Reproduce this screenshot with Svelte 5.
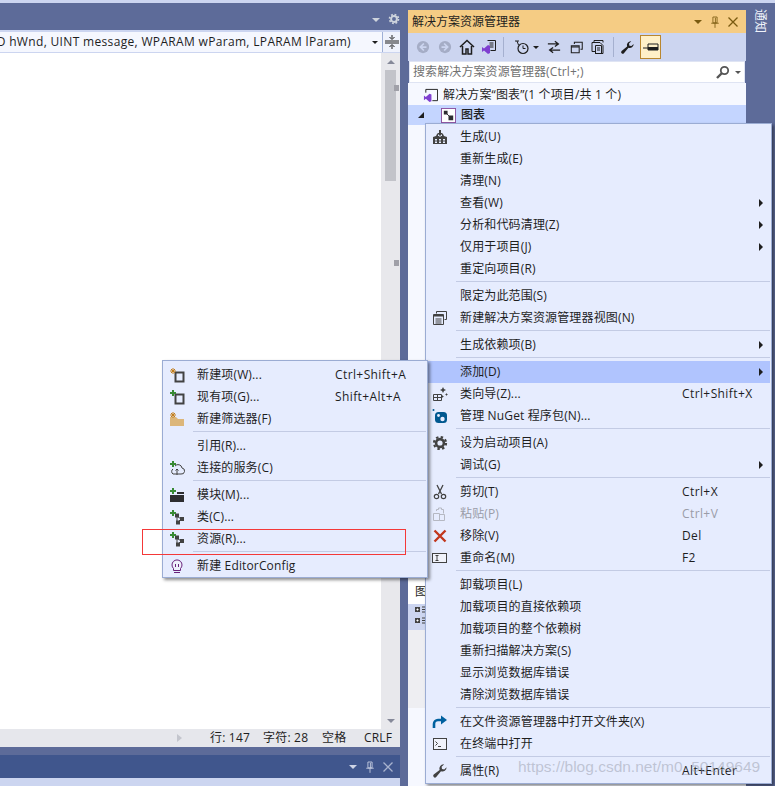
<script>
  const mainMenu = [
    { t: '生成(U)', i: 'build' }, { t: '重新生成(E)' }, { t: '清理(N)' },
    { t: '查看(W)', a: 1 }, { t: '分析和代码清理(Z)', a: 1 }, { t: '仅用于项目(J)', a: 1 }, { t: '重定向项目(R)' },
    { sep: 1 },
    { t: '限定为此范围(S)' }, { t: '新建解决方案资源管理器视图(N)', i: 'view' },
    { sep: 1 },
    { t: '生成依赖项(B)', a: 1 },
    { sep: 1 },
    { t: '添加(D)', a: 1, hi: 1 }, { t: '类向导(Z)...', s: 'Ctrl+Shift+X', i: 'wizard' }, { t: '管理 NuGet 程序包(N)...', i: 'nuget' },
    { sep: 1 },
    { t: '设为启动项目(A)', i: 'gear' }, { t: '调试(G)', a: 1 },
    { sep: 1 },
    { t: '剪切(T)', s: 'Ctrl+X', i: 'cut' }, { t: '粘贴(P)', s: 'Ctrl+V', i: 'paste', dis: 1 },
    { t: '移除(V)', s: 'Del', i: 'remove' }, { t: '重命名(M)', s: 'F2', i: 'rename' },
    { sep: 1 },
    { t: '卸载项目(L)' }, { t: '加载项目的直接依赖项' }, { t: '加载项目的整个依赖树' },
    { t: '重新扫描解决方案(S)' }, { t: '显示浏览数据库错误' }, { t: '清除浏览数据库错误' },
    { sep: 1 },
    { t: '在文件资源管理器中打开文件夹(X)', i: 'open' }, { t: '在终端中打开', i: 'term' },
    { sep: 1 },
    { t: '属性(R)', s: 'Alt+Enter', i: 'wrench' }
  ];
  const subMenu = [
    { t: '新建项(W)...', s: 'Ctrl+Shift+A', i: 'newitem' }, { t: '现有项(G)...', s: 'Shift+Alt+A', i: 'existing' }, { t: '新建筛选器(F)', i: 'filter' },
    { sep: 1 },
    { t: '引用(R)...' }, { t: '连接的服务(C)', i: 'service' },
    { sep: 1 },
    { t: '模块(M)...', i: 'module' }, { t: '类(C)...', i: 'cls' }, { t: '资源(R)...', i: 'cls' },
    { sep: 1 },
    { t: '新建 EditorConfig', i: 'bulb' }
  ];
</script>

{#snippet plus(x, y)}
  <path d="M{x - 1} {y - 3}h2v2h2v2h-2v2h-2v-2h-2v-2h2z" fill="#388a34" />
{/snippet}
{#snippet star(x, y)}
  <path d="M{x} {y - 3}v6M{x - 3} {y}h6M{x - 2} {y - 2}l4 4M{x + 2} {y - 2}l-4 4" stroke="#c27d1a" stroke-width="1" fill="none" />
{/snippet}
{#snippet gearShape(c)}
  <circle cx="8" cy="8" r="6" fill="none" stroke={c} stroke-width="2.2" stroke-dasharray="2.4 2.31" />
  <circle cx="8" cy="8" r="3.9" fill="none" stroke={c} stroke-width="2.6" />
{/snippet}
{#snippet wrenchShape(c)}
  <path d="M14.6 4.2a4.2 4.2 0 0 1-5.6 4L4.2 14a1.7 1.7 0 0 1-2.5-2.4L7.6 7A4.2 4.2 0 0 1 12 1.4L9.6 3.8l.4 2.2 2.2.4z" fill={c} />
{/snippet}

{#snippet icon(n)}
  <svg class="ic" viewBox="0 0 16 16" width="16" height="16">
    {#if n === 'build'}
      <path d="M1 15V8l3-1 1-2h1v2h1l1 1 1-1h1V5h1l1 2 3 1v7z" fill="#424242" />
      <path d="M7 1h2v3h2L8 7 5 4h2z" fill="#424242" />
      <path d="M3 10h2v1.5H3zM7 10h2v1.5H7zM11 10h2v1.5h-2zM3 12.5h2V14H3zM7 12.5h2V14H7zM11 12.5h2V14h-2z" fill="#e6ecfe" />
    {:else if n === 'view'}
      <path d="M4.5 3.5V1.500h10v8h-2" fill="none" stroke="#424242" />
      <path d="M1.5 4.5h10v10h-10z" fill="none" stroke="#424242" />
      <path d="M1.5 5h10v1.500h-10zM3.5 8.500h6v1h-6zM3.5 10.500h6v1h-6zM3.5 12.500h6v1h-6z" fill="#424242" />
    {:else if n === 'wizard'}
      <path d="M1.5 8.5h8v6h-8zM5.5 8.5v6M1.5 11.5h8" fill="none" stroke="#424242" />
      <path d="M11 1l1 2 2 1-2 1-1 2-1-2-2-1 2-1zM14.5 7l.5 1 1 .5-1 .5-.5 1-.5-1-1-.5 1-.5zM10.500 9l.5 1 1 .5-1 .5-.5 1-.5-1-1-.5 1-.5z" fill="#424242" />
    {:else if n === 'nuget'}
      <rect x="3" y="4" width="12" height="11" rx="3.500" fill="#00588f" />
      <circle cx="1.500" cy="2" r="1" fill="#00588f" />
      <circle cx="6.500" cy="7.500" r="1.400" fill="#e6ecfe" />
      <circle cx="10.500" cy="11" r="2.200" fill="#e6ecfe" />
    {:else if n === 'gear'}
      {@render gearShape('#424242')}
    {:else if n === 'cut'}
      <path d="M5 1l4.500 9M11 1L6.500 10" stroke="#424242" stroke-width="1.300" fill="none" />
      <circle cx="4.500" cy="12.500" r="2.200" fill="none" stroke="#424242" stroke-width="1.200" />
      <circle cx="11.500" cy="12.500" r="2.200" fill="none" stroke="#424242" stroke-width="1.200" />
    {:else if n === 'paste'}
      <path d="M4.500 5V3.500h2V2h3v1.500h2v4M1.500 7.500h6v7h-6zM7.500 8.500h5v6h-5z" fill="none" stroke="#b5b8c2" />
    {:else if n === 'remove'}
      <path d="M2.500 2.500l11 11M13.500 2.500l-11 11" stroke="#c1371d" stroke-width="2.400" fill="none" />
    {:else if n === 'rename'}
      <rect x="0.500" y="3.500" width="14" height="9" fill="#f1f3fb" stroke="#424242" />
      <path d="M3.500 5.500h3M3.500 10.500h3M5 5.500v5" stroke="#424242" fill="none" />
    {:else if n === 'open'}
      <path d="M2 14V10a4 4 0 0 1 4-4h6" fill="none" stroke="#00609f" stroke-width="2.600" />
      <path d="M9 1.500l6 4.500-6 4.500z" fill="#00609f" />
    {:else if n === 'term'}
      <rect x="1.500" y="2.500" width="13" height="11" fill="#f1f3fb" stroke="#424242" />
      <path d="M3.500 5.500l2 2-2 2M6 10.500h3" fill="none" stroke="#424242" />
    {:else if n === 'wrench'}
      {@render wrenchShape('#424242')}
    {:else if n === 'newitem'}
      <path d="M6.500 5.500h8v9h-8z" fill="none" stroke="#424242" stroke-width="2" />
      {@render star(4, 4)}
    {:else if n === 'existing'}
      <path d="M6.500 5.500h8v9h-8z" fill="none" stroke="#424242" stroke-width="2" />
      {@render plus(4, 4)}
    {:else if n === 'filter'}
      <path d="M1 6h6l2 2h6v7H1z" fill="#dcb67a" />
      {@render star(4, 4)}
    {:else if n === 'service'}
      <path d="M4 9a3 3 0 0 0 0 5h8a3 3 0 0 0 1-6 4 4 0 0 0-7-2" fill="none" stroke="#424242" />
      <path d="M8 15V9M6.500 10.500L8 9l1.500 1.500" fill="none" stroke="#424242" />
      {@render plus(4, 4)}
    {:else if n === 'module'}
      <path d="M1 8h14v7H1z" fill="#2d2d30" />
      <path d="M8 5h7v2H8z" fill="#2d2d30" />
      {@render plus(4, 4)}
    {:else if n === 'cls'}
      <path d="M6 4.500h4v4H6zM11 8h4v4h-4zM7 11.500h4v4H7z" fill="#424242" />
      <path d="M8 7l4 3M12 10l-3 3M8 7v5" stroke="#424242" fill="none" />
      {@render plus(4, 4)}
    {:else if n === 'bulb'}
      <path d="M4.500 10.500a5 5 0 1 1 7 0v2h-7z" fill="#eef0fb" stroke="#68217a" />
      <path d="M5 14.500h6" stroke="#68217a" />
      <path d="M6.500 6v3M9.500 6v3" stroke="#68217a" />
    {/if}
  </svg>
{/snippet}

{#snippet menu(items, cls)}
  <div class={cls}>
    {#each items as it}
      {#if it.sep}
        <div class="sep"></div>
      {:else}
        <div class="item" class:hi={it.hi} class:dis={it.dis}>
          <span class="icol">{#if it.i}{@render icon(it.i)}{/if}</span>
          <span class="lbl">{it.t}</span>
          <span class="sc">{it.s ?? ''}{#if it.a}<i class="arrow"></i>{/if}</span>
        </div>
      {/if}
    {/each}
  </div>
{/snippet}

<div class="root">
  <div class="topstrip"></div>
  <div class="work">
    <section class="left">
      <div class="tabs">
        <i class="drop light"></i>
        <svg class="tabgear" viewBox="0 0 16 16" width="12" height="12">{@render gearShape('#ced4dd')}</svg>
      </div>
      <div class="nav">
        <div class="navbox">
          <span class="sig">D hWnd, UINT message, WPARAM wParam, LPARAM lParam)</span>
          <i class="drop dark"></i>
        </div>
        <div class="split">
          <svg viewBox="0 0 14 14" width="14" height="14"><path d="M0 6h14M0 8h14M7 0v3.500M7 10.500V14M4.500 2L7 4.500 9.500 2M4.500 12L7 9.500 9.500 12" fill="none" stroke="#1e1e1e" /></svg>
        </div>
      </div>
      <div class="editor">
        <div class="code"></div>
        <div class="scroll">
          <i class="sup"></i>
          <div class="thumb"></div>
          <b class="mark m1"></b>
          <b class="mark m2"></b>
          <i class="sdown"></i>
        </div>
      </div>
      <div class="status">
        <i class="sarrow"></i>
        <span class="st s1">行: 147</span>
        <span class="st s2">字符: 28</span>
        <span class="st s3">空格</span>
        <span class="st s4">CRLF</span>
      </div>
      <div class="phead">
        <i class="drop light2"></i>
        <svg viewBox="0 0 12 14" width="10" height="12"><path d="M3.500 1h5v7h-5zM1.500 8.500h9M6 8.500V14M6.500 2v6" fill="none" stroke="#ced4e6" /></svg>
        <svg viewBox="0 0 10 10" width="10" height="10"><path d="M.5.5l9 9M9.500.5l-9 9" stroke="#a8b3cf" stroke-width="1.300" /></svg>
      </div>
      <div class="pbody"></div>
    </section>

    <section class="se">
      <header class="sehead">
        <span class="setitle">解决方案资源管理器</span>
        <i class="drop brown"></i>
        <svg viewBox="0 0 12 14" width="10" height="12"><path d="M3.500 1h5v7h-5zM1.500 8.500h9M6 8.500V14M6.500 2v6" fill="none" stroke="#7a5a10" /></svg>
        <svg viewBox="0 0 10 10" width="10" height="10"><path d="M.5.5l9 9M9.500.5l-9 9" stroke="#7a5a10" stroke-width="1.300" /></svg>
      </header>
      <div class="tools">
        <svg viewBox="0 0 16 16" width="14" height="14"><circle cx="8" cy="8" r="7" fill="#a5adc6" /><path d="M9 4L5 8l4 4M5 8h7" fill="none" stroke="#ccd5f0" stroke-width="2" /></svg>
        <svg viewBox="0 0 16 16" width="14" height="14"><circle cx="8" cy="8" r="7" fill="#a5adc6" /><path d="M7 4l4 4-4 4M11 8H4" fill="none" stroke="#ccd5f0" stroke-width="2" /></svg>
        <svg viewBox="0 0 16 16" width="16" height="16"><path d="M1 8l7-6.500L15 8M3.500 7v8h3.500v-5h2v5h3.500V7" fill="none" stroke="#1e1e1e" stroke-width="1.500" /></svg>
        <svg viewBox="0 0 16 16" width="16" height="16"><path d="M6.500 1.500h8v10h-5" fill="#ccd5f0" stroke="#1e1e1e" /><path d="M8.500 4h4M8.500 6h4M8.500 8h4" stroke="#1e1e1e" /><path d="M1 8l2 1.500L7 6l2 1v7l-2 1-4-3.500L1 13z" fill="#7f3fd0" /></svg>
        <b class="tsep"></b>
        <svg viewBox="0 0 16 16" width="16" height="16"><circle cx="9" cy="9.500" r="5" fill="none" stroke="#1e1e1e" stroke-width="1.200" /><path d="M9 6.500v3h2.500M1 2h4M3 2l1.500 4" fill="none" stroke="#1e1e1e" /></svg>
        <i class="drop dark tdrop"></i>
        <svg viewBox="0 0 16 16" width="14" height="14"><path d="M1 4.500h12M9 1.500l4 3-4 3M15 11.500H3M7 8.500l-4 3 4 3" fill="none" stroke="#1e1e1e" stroke-width="1.500" /></svg>
        <svg viewBox="0 0 16 16" width="14" height="14"><path d="M1.500 6.500h9v8h-9zM5 4.500V2.500h9v8h-2M1.500 8h9" fill="none" stroke="#1e1e1e" stroke-width="1.200" /></svg>
        <svg viewBox="0 0 16 16" width="16" height="16"><path d="M4 3.500V1.500h6l3 0v2M2 5.500V3.500h8l3 3v8H5M2 5.500v7h3" fill="none" stroke="#1e1e1e" /><path d="M5.500 6.500h6v8h-6zM7 9h3M7 11h3" fill="none" stroke="#1e1e1e" /></svg>
        <b class="tsep"></b>
        <svg viewBox="0 0 16 16" width="15" height="15">{@render wrenchShape('#1e1e1e')}</svg>
        <div class="pinbtn"><svg viewBox="0 0 16 10" width="16" height="10"><path d="M0 6h5V2h10v6H5V6" fill="#fff0c8" stroke="#1e1e1e" /><path d="M5 5h10v3H5z" fill="#1e1e1e" /></svg></div>
      </div>
      <div class="search">
        <span class="ph">搜索解决方案资源管理器(Ctrl+;)</span>
        <svg viewBox="0 0 14 14" width="14" height="14"><circle cx="8.500" cy="5.500" r="3.700" fill="none" stroke="#555" stroke-width="1.800" /><path d="M6 8l-5 5" stroke="#555" stroke-width="2.400" /></svg>
        <i class="drop gray"></i>
      </div>
      <div class="tree">
        <div class="row r1">
          <svg viewBox="0 0 16 16" width="15" height="15"><path d="M3 5V1.500h12.500v12H10" fill="none" stroke="#1e1e1e" /><path d="M1 8l2 1.500L7 6l2 1v7l-2 1-4-3.500L1 13z" fill="#7f3fd0" /></svg>
          <span>解决方案“图表”(1 个项目/共 1 个)</span>
        </div>
        <div class="row r2">
          <i class="expand"></i>
          <svg viewBox="0 0 16 16" width="15" height="15"><rect x="0.500" y="0.500" width="15" height="15" fill="#fff" stroke="#8a4f9e" /><path d="M3 3h4v4H3zM8 8h5v5H8z" fill="#2d2d30" /><path d="M6 6l4 4" stroke="#2d2d30" /></svg>
          <span>图表</span>
        </div>
        <div class="treefill"></div>
      </div>
      <div class="lower">
        <div class="ltab">图</div>
        <div class="lbar">
          <svg viewBox="0 0 16 24" width="16" height="24"><path d="M1 3h5v5H1zM1 14h5v5H1z" fill="#424242" /><path d="M2.500 5.500h2M3.500 4.500v2M2.500 16.500h2M3.500 15.500v2" stroke="#fff" /><path d="M8 3h8M8 5.500h8M8 8h8M8 14h8M8 16.500h8M8 19h8" stroke="#424242" /></svg>
        </div>
        <div class="lgrid"></div>
        <div class="lwhite"></div>
      </div>
    </section>

    <aside class="notify"><span class="ntxt">通知</span></aside>
  </div>

  {@render menu(mainMenu, 'menu mainm')}
  {@render menu(subMenu, 'menu subm')}
  <div class="redbox"></div>
  <div class="wm">https://blog.csdn.net/m0_50149649</div>
</div>

<style>
  :global(body) { margin: 0; }
  .root {
    position: relative; width: 775px; height: 786px; overflow: hidden;
    background: #5d6b99; display: flex; flex-direction: column;
    font: 12px/16px "Open Sans", "Noto Sans CJK SC", sans-serif; color: #1e1e1e;
  }
  i, b { display: block; font-style: normal; }
  .topstrip { height: 3px; flex: none; background: #ccd5f0; }
  .work { flex: 1; display: flex; min-height: 0; }
  .left { width: 400px; flex: none; display: flex; flex-direction: column; }
  .tabs { height: 27px; flex: none; display: flex; justify-content: flex-end; align-items: center; gap: 8px; padding-top: 8px; box-sizing: border-box; }
  .tabgear { margin-bottom: 4px; }
  .tabs .drop { margin-bottom: 2px; }
  .drop { width: 0; height: 0; border-left: 4px solid transparent; border-right: 4px solid transparent; border-top: 4px solid; flex: none; }
  .drop.light { border-top-color: #ced4dd; }
  .drop.light2 { border-top-color: #ced4e6; }
  .drop.dark { border-left-width: 3px; border-right-width: 3px; border-top-width: 3px; border-top-color: #1e1e1e; }
  .drop.brown { border-top-color: #7a5a10; }
  .drop.gray { border-left-width: 3px; border-right-width: 3px; border-top-width: 3px; border-top-color: #555; }

  .nav { height: 23px; flex: none; display: flex; background: #ccd5f0; }
  .navbox { flex: 1; min-width: 0; margin: 2px 0 1px; background: #f5f7fe; display: flex; align-items: center; justify-content: flex-end; padding-right: 4px; overflow: hidden; white-space: nowrap; border-right: 1px solid #9fb0d6; }
  .sig { margin-right: 21px; letter-spacing: .33px; }
  .split { width: 17px; flex: none; margin: 2px 0 1px; background: #eff2fc; display: flex; align-items: center; justify-content: center; }

  .editor { flex: 1; display: flex; min-height: 0; }
  .code { flex: 1; background: #fff; }
  .scroll { width: 19px; flex: none; background: #e8e8ec; display: flex; flex-direction: column; align-items: center; position: relative; padding-top: 7px; box-sizing: border-box; }
  .sup, .sdown { width: 0; height: 0; border-left: 4px solid transparent; border-right: 4px solid transparent; }
  .sup { border-bottom: 4px solid #868999; }
  .sdown { border-top: 4px solid #868999; margin-top: auto; margin-bottom: 6px; }
  .thumb { width: 11px; height: 111px; background: #c2c3c9; margin-top: 6px; }
  .mark { position: absolute; left: 13px; width: 5px; height: 6px; background: #a0a0a8; }
  .m1 { top: 32px; }
  .m2 { top: 207px; }

  .status { height: 18px; flex: none; background: #e6e7ec; position: relative; display: flex; align-items: center; }
  .sarrow { position: absolute; left: 177px; top: 5px; width: 0; height: 0; border-top: 4px solid transparent; border-bottom: 4px solid transparent; border-left: 5px solid #c3c5cd; }
  .st { position: absolute; top: 1px; white-space: nowrap; letter-spacing: .2px; }
  .s1 { left: 210px; } .s2 { left: 263px; } .s3 { left: 322px; } .s4 { left: 364px; }

  .phead { margin-top: 8px; height: 23px; flex: none; background: #40568d; display: flex; align-items: center; justify-content: flex-end; gap: 8px; padding-right: 7px; box-sizing: border-box; }
  .pbody { height: 8px; flex: none; background: #ccd5f0; }

  .se { width: 338px; flex: none; margin: 7px 0 0 8px; display: flex; flex-direction: column; }
  .sehead { height: 23px; flex: none; background: #f5cc84; display: flex; align-items: center; padding: 0 8px 0 4px; gap: 8px; }
  .setitle { flex: 1; }
  .tools { height: 28px; flex: none; background: #ccd5f0; display: flex; align-items: center; padding-left: 8px; box-sizing: border-box; }
  .tools > :nth-child(2) { margin-left: 8px; }
  .tools > :nth-child(3) { margin-left: 7px; }
  .tools > :nth-child(4) { margin-left: 6px; }
  .tools > :nth-child(5) { margin-left: 6px; }
  .tools > :nth-child(6) { margin-left: 10px; }
  .tools > :nth-child(7) { margin-left: 3px; }
  .tools > :nth-child(8) { margin-left: 8px; }
  .tools > :nth-child(9) { margin-left: 9px; }
  .tools > :nth-child(10) { margin-left: 6px; }
  .tools > :nth-child(11) { margin-left: 7px; }
  .tools > :nth-child(12) { margin-left: 6px; }
  .tools > :nth-child(13) { margin-left: 5px; }
  .tsep { width: 1px; height: 20px; background: #a5b0cf; }
  .pinbtn { width: 21px; height: 24px; box-sizing: border-box; border: 1px solid #b9872f; background: #fff0c8; display: flex; align-items: center; justify-content: center; }
  .search { height: 22px; flex: none; margin: 0 1px; background: #fff; display: flex; align-items: center; gap: 5px; padding: 0 3px; box-sizing: border-box; border: 1px solid #dfe4f3; }
  .ph { flex: 1; color: #717171; letter-spacing: .1px; }
  .tree { flex: 1; background: #f6f8ff; display: flex; flex-direction: column; padding-top: 2px; min-height: 0; box-sizing: border-box; }
  .row { height: 20px; flex: none; display: flex; align-items: center; }
  .r1 { padding-left: 15px; gap: 5px; letter-spacing: .15px; }
  .r2 { background: #c4d5ff; padding-left: 9px; }
  .r2 svg { margin: 0 5px 0 17px; }
  .r2 span { font-weight: 500; }
  .expand { width: 0; height: 0; border-bottom: 6px solid #1e1e1e; border-left: 6px solid transparent; margin-left: 1px; }
  .treefill { flex: 1; }
  .lower { flex: none; height: 206px; display: flex; flex-direction: column; }
  .ltab { height: 24px; background: #fff; padding-left: 7px; line-height: 24px; flex: none; }
  .lbar { height: 26px; background: #ccd5f0; flex: none; padding-left: 6px; }
  .lgrid { height: 78px; background: #eeeef2; flex: none; }
  .lwhite { flex: 1; background: #f6f8ff; }

  .notify { flex: 1; position: relative; }
  .ntxt { position: absolute; left: 8px; top: 6px; writing-mode: vertical-rl; text-orientation: sideways; color: #f0f3fb; font-size: 12px; line-height: 12px; }

  .menu { position: absolute; box-sizing: border-box; background: #e6ecfe; border: 1px solid #9bacd3; box-shadow: 2px 2px 3px rgba(0, 0, 0, .45); }
  .mainm { left: 425px; top: 123px; width: 347px; padding: 2px 1px 1px; }
  .subm { left: 162px; top: 360px; width: 266px; padding: 3px 1px 0; }
  .item { height: 22px; display: flex; align-items: center; }
  .item.hi { background: #b0c4fe; }
  .item.dis { color: #9a9ca8; }
  .icol { width: 33px; flex: none; display: flex; align-items: center; }
  .ic { display: block; margin-left: 5px; }
  .lbl { flex: 1; white-space: nowrap; letter-spacing: .15px; }
  .sc { flex: none; display: flex; align-items: center; white-space: nowrap; letter-spacing: .4px; }
  .mainm .sc { width: 88px; }
  .subm .sc { width: 91px; }
  .arrow { margin-left: auto; margin-right: 7px; width: 0; height: 0; border-top: 4px solid transparent; border-bottom: 4px solid transparent; border-left: 4px solid #1e1e1e; }
  .sep { height: 1px; margin: 1px 0 3px 29px; background: #c3cbe4; }
  .redbox { position: absolute; left: 142px; top: 529px; width: 264px; height: 26px; box-sizing: border-box; border: 1px solid #f43838; pointer-events: none; }
  .wm { position: absolute; left: 518px; top: 756px; font: 15.500px/22px "Liberation Sans", sans-serif; color: rgba(150, 155, 170, .5); white-space: nowrap; pointer-events: none; }
</style>
